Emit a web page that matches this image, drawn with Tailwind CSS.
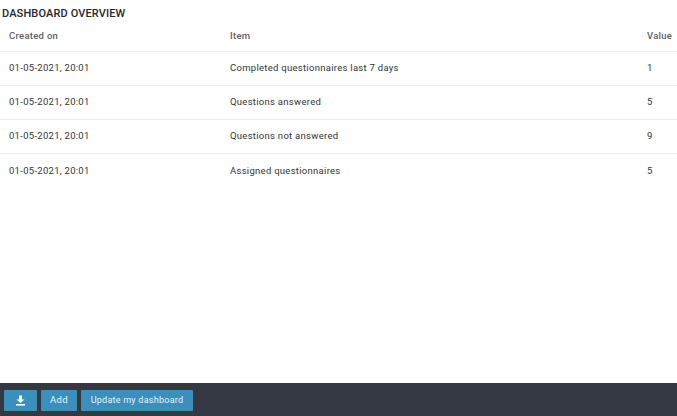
<!DOCTYPE html>
<html lang="en">

<head>
  <meta charset="UTF-8">
  <title>Dashboard overview</title>
  <script src="https://cdn.jsdelivr.net/npm/@tailwindcss/browser@4"></script>
</head>

<body class="bg-white font-['Roboto',sans-serif] text-[#333438]">
  <div class="flex flex-col h-[416px] overflow-hidden">
    <div class="flex-1">
      <h1 class="pl-[2px] pt-[7px] text-[11px] leading-[14px] font-medium tracking-[0.13px] text-[#25262b]">DASHBOARD OVERVIEW</h1>

      <!-- Table -->
      <table class="w-full text-[9.5px] tracking-[0.28px] border-collapse">
        <thead>
          <tr class="h-[30px] border-b border-[#ececec] text-[#5f6063]">
            <th class="w-[230px] pl-[9px] pt-[1px] text-left font-medium">Created on</th>
            <th class="pt-[1px] text-left font-medium">Item</th>
            <th class="w-[30px] pt-[1px] text-left font-medium">Value</th>
          </tr>
        </thead>
        <tbody>
          <tr class="h-[34px] border-b border-[#ececec]">
            <td class="pl-[9px] pt-[1px]">01-05-2021, 20:01</td>
            <td class="pt-[1px]">Completed questionnaires last 7 days</td>
            <td class="pt-[1px]">1</td>
          </tr>
          <tr class="h-[34px] border-b border-[#ececec]">
            <td class="pl-[9px] pt-[1px]">01-05-2021, 20:01</td>
            <td class="pt-[1px]">Questions answered</td>
            <td class="pt-[1px]">5</td>
          </tr>
          <tr class="h-[34px] border-b border-[#ececec]">
            <td class="pl-[9px] pt-[1px]">01-05-2021, 20:01</td>
            <td class="pt-[1px]">Questions not answered</td>
            <td class="pt-[1px]">9</td>
          </tr>
          <tr class="h-[34px]">
            <td class="pl-[9px] pt-[1px]">01-05-2021, 20:01</td>
            <td class="pt-[1px]">Assigned questionnaires</td>
            <td class="pt-[1px]">5</td>
          </tr>
        </tbody>
      </table>
    </div>

    <!-- Footer -->
    <div class="h-[33px] bg-[#343842] flex items-center gap-[4px] pl-[4px] pt-[2px]">
      <button class="w-[33px] h-[21px] bg-[#3d8fbb] rounded-[1px] flex items-center justify-center">
        <svg width="11" height="11" viewBox="0 0 11 11" fill="#fff">
          <path d="M4 0.5h3v4h2.5L5.5 8 1.5 4.5H4z" />
          <rect x="1" y="9" width="9" height="1.6" />
        </svg>
      </button>
      <button class="w-[36px] h-[21px] bg-[#3d8fbb] rounded-[1px] text-[#e8f2f7] text-[9.5px] tracking-[0.3px]">Add</button>
      <button class="w-[112px] h-[21px] bg-[#3d8fbb] rounded-[1px] text-[#e8f2f7] text-[9px] tracking-[0.25px]">Update my dashboard</button>
    </div>
  </div>
</body>

</html>
